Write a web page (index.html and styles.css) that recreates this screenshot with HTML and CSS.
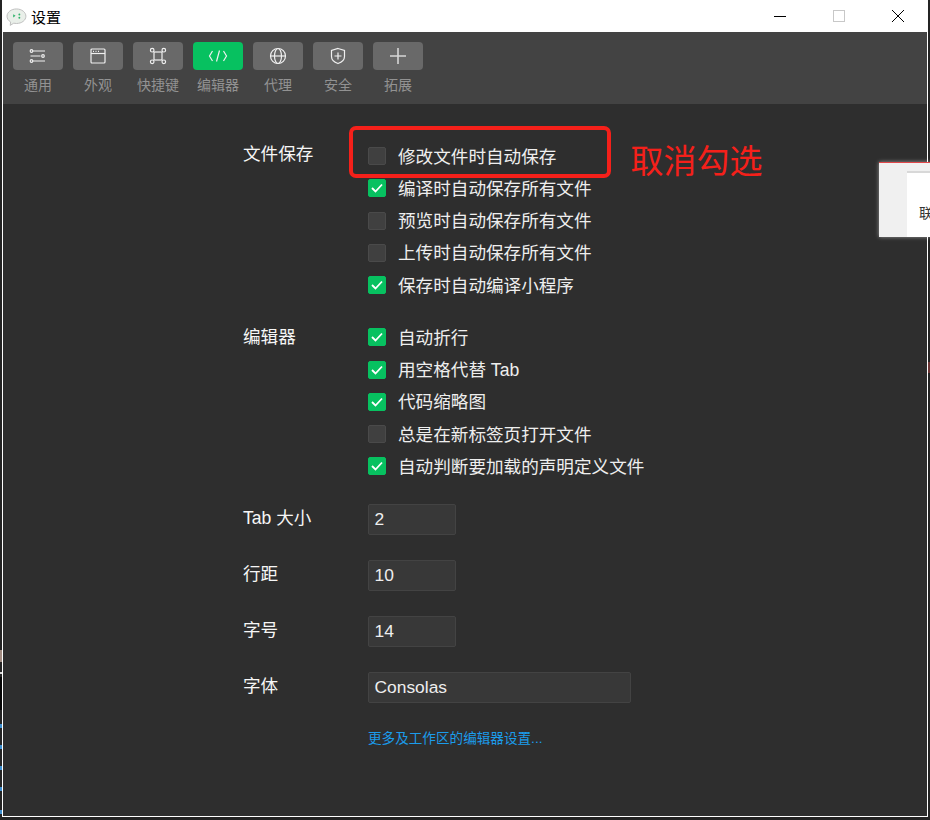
FILE: index.html
```html
<!DOCTYPE html>
<html lang="zh-CN">
<head>
<meta charset="utf-8">
<title>设置</title>
<link rel="stylesheet" href="styles.css">
</head>
<body>
<div class="desktop">
  <div class="window">
    <header class="titlebar">
      <div class="title">
        <svg class="logo" width="21" height="19" viewBox="0 0 22 20"><path d="M11 1C5.500 1 1 4.400 1 8.700c0 2.500 1.500 4.600 3.800 6l-.4 3.600 3.700-2.300c1 .2 1.900.3 2.900.3 5.500 0 9.900-3.400 9.900-7.600S16.500 1 11 1z" fill="#e9efe9" stroke="#bdbdbd"/><path d="M7.500 6.500l2.500 1.700-2.500 1.700z" fill="#2fb36a"/><circle cx="14" cy="6.800" r="1" fill="#2fb36a"/><circle cx="14" cy="10.200" r="1" fill="#2fb36a"/></svg>
        <span>设置</span>
      </div>
      <div class="controls">
        <span class="control"><svg width="14" height="14" viewBox="0 0 14 14"><path d="M1 7.500h12" stroke="#000" fill="none"/></svg></span>
        <span class="control"><svg width="14" height="14" viewBox="0 0 14 14"><rect x="1.500" y="1.500" width="11" height="11" stroke="#c8c8c8" fill="none"/></svg></span>
        <span class="control"><svg width="14" height="14" viewBox="0 0 14 14"><path d="M1 1l12 12M13 1L1 13" stroke="#000" fill="none"/></svg></span>
      </div>
    </header>

    <nav class="toolbar">
      <div class="tool">
        <span class="tool-btn"><svg width="18" height="18" viewBox="0 0 18 18" class="ico"><path d="M4 4h12M1.500 9h10M4 14h12"/><circle cx="2.500" cy="4" r="1.300"/><circle cx="14" cy="9" r="1.300"/><circle cx="2.500" cy="14" r="1.300"/></svg></span>
        <span class="tool-label">通用</span>
      </div>
      <div class="tool">
        <span class="tool-btn"><svg width="18" height="18" viewBox="0 0 18 18" class="ico"><rect x="2" y="2" width="14" height="14" rx="1"/><path d="M2 6.500h14"/><path d="M4 4.300h1M6.500 4.300h1M9 4.300h1"/></svg></span>
        <span class="tool-label">外观</span>
      </div>
      <div class="tool">
        <span class="tool-btn"><svg width="18" height="18" viewBox="0 0 18 18" class="ico"><rect x="5" y="5" width="8" height="8"/><circle cx="3.200" cy="3.200" r="1.800"/><circle cx="14.800" cy="3.200" r="1.800"/><circle cx="3.200" cy="14.800" r="1.800"/><circle cx="14.800" cy="14.800" r="1.800"/></svg></span>
        <span class="tool-label">快捷键</span>
      </div>
      <div class="tool">
        <span class="tool-btn tool-btn-active"><svg width="20" height="18" viewBox="0 0 20 18" class="ico"><path d="M4.500 4L1.500 9l3 5M15.500 4l3 5-3 5M11.500 3.500l-3 11"/></svg></span>
        <span class="tool-label">编辑器</span>
      </div>
      <div class="tool">
        <span class="tool-btn"><svg width="18" height="18" viewBox="0 0 18 18" class="ico"><circle cx="9" cy="9" r="7.500"/><ellipse cx="9" cy="9" rx="3.500" ry="7.500"/><path d="M1.500 9h15"/></svg></span>
        <span class="tool-label">代理</span>
      </div>
      <div class="tool">
        <span class="tool-btn"><svg width="18" height="18" viewBox="0 0 18 18" class="ico"><path d="M9 1.500l6.500 2v6c0 3.500-3 5.800-6.500 7-3.500-1.200-6.500-3.500-6.500-7v-6z"/><path d="M9 5.500v7M5.500 9h7"/></svg></span>
        <span class="tool-label">安全</span>
      </div>
      <div class="tool">
        <span class="tool-btn"><svg width="18" height="18" viewBox="0 0 18 18" class="ico ico-plus"><path d="M9 1v16M1 9h16"/></svg></span>
        <span class="tool-label">拓展</span>
      </div>
    </nav>

    <main class="content">
      <section class="group">
        <div class="group-label group-label-first">文件保存</div>
        <div class="group-body">
          <label class="check"><span class="box"></span>修改文件时自动保存</label>
          <label class="check"><span class="box box-on"><svg width="12" height="10" viewBox="0 0 12 10"><path d="M1 5l3.500 3.500L11 1.500"/></svg></span>编译时自动保存所有文件</label>
          <label class="check"><span class="box"></span>预览时自动保存所有文件</label>
          <label class="check"><span class="box"></span>上传时自动保存所有文件</label>
          <label class="check"><span class="box box-on"><svg width="12" height="10" viewBox="0 0 12 10"><path d="M1 5l3.500 3.500L11 1.500"/></svg></span>保存时自动编译小程序</label>
        </div>
      </section>
      <section class="group">
        <div class="group-label group-label-low">编辑器</div>
        <div class="group-body">
          <label class="check"><span class="box box-on"><svg width="12" height="10" viewBox="0 0 12 10"><path d="M1 5l3.500 3.500L11 1.500"/></svg></span>自动折行</label>
          <label class="check"><span class="box box-on"><svg width="12" height="10" viewBox="0 0 12 10"><path d="M1 5l3.500 3.500L11 1.500"/></svg></span>用空格代替 Tab</label>
          <label class="check"><span class="box box-on"><svg width="12" height="10" viewBox="0 0 12 10"><path d="M1 5l3.500 3.500L11 1.500"/></svg></span>代码缩略图</label>
          <label class="check"><span class="box"></span>总是在新标签页打开文件</label>
          <label class="check"><span class="box box-on"><svg width="12" height="10" viewBox="0 0 12 10"><path d="M1 5l3.500 3.500L11 1.500"/></svg></span>自动判断要加载的声明定义文件</label>
        </div>
      </section>
      <div class="fields">
        <div class="field"><div class="group-label">Tab 大小</div><div class="input input-short">2</div></div>
        <div class="field"><div class="group-label">行距</div><div class="input input-short">10</div></div>
        <div class="field"><div class="group-label">字号</div><div class="input input-short">14</div></div>
        <div class="field"><div class="group-label">字体</div><div class="input input-long">Consolas</div></div>
      </div>
      <a class="more">更多及工作区的编辑器设置...</a>
    </main>

    <div class="highlight"></div>
    <div class="annotation">取消勾选</div>
    <div class="popover">
      <div class="popover-side"></div>
      <div class="popover-main"><span class="popover-char">联</span></div>
    </div>
  </div>
  <i class="edge edge-a"></i><i class="edge edge-b"></i><i class="edge edge-c"></i>
  <i class="edge edge-dot d1"></i><i class="edge edge-dot d2"></i><i class="edge edge-dot d3"></i><i class="edge edge-dot d4"></i><i class="edge edge-dot d5"></i>
  <i class="edge edge-r"></i>
</div>
</body>
</html>
```

FILE: styles.css
```css
html, body {
  margin: 0;
  padding: 0;
}

body {
  font-family: "Liberation Sans", "Noto Sans CJK SC", sans-serif;
}

.desktop {
  position: relative;
  width: 930px;
  height: 820px;
  overflow: hidden;
  background: #242424;
  padding-left: 2px;
  box-sizing: border-box;
}

.window {
  position: relative;
  width: 926px;
  height: 817px;
  box-sizing: border-box;
  border: 1px solid #fff;
  border-top: 0;
  display: flex;
  flex-direction: column;
  background: #2e2e2e;
}

.titlebar {
  height: 32px;
  flex: none;
  background: #fff;
  display: flex;
  align-items: center;
  justify-content: space-between;
}

.title {
  display: flex;
  align-items: center;
  gap: 4px;
  padding-left: 3px;
  font-size: 15px;
  color: #000;
}

.logo {
  display: block;
  margin-top: 2px;
}

.controls {
  display: flex;
}

.control {
  width: 59px;
  height: 32px;
  display: flex;
  align-items: center;
  justify-content: center;
}

.toolbar {
  height: 72px;
  flex: none;
  background: #434343;
  box-sizing: border-box;
  padding: 10px 0 0 10px;
  display: flex;
  gap: 10px;
}

.tool {
  width: 50px;
  display: flex;
  flex-direction: column;
  align-items: center;
}

.tool-btn {
  width: 50px;
  height: 28px;
  border-radius: 4px;
  background: #696969;
  display: flex;
  align-items: center;
  justify-content: center;
}

.tool-btn-active {
  background: #07c160;
}

.ico {
  fill: none;
  stroke: #f0f0f0;
  stroke-width: 1.200;
}

.ico-plus {
  stroke: #d6d6d6;
  stroke-width: 1.600;
}

.tool-label {
  margin-top: 5px;
  width: 70px;
  text-align: center;
  font-size: 14px;
  line-height: 20px;
  color: #929292;
}

.content {
  flex: 1;
  padding: 35px 0 0 240px;
  color: #f0f0f0;
  font-size: 17.600px;
}

.group {
  display: flex;
  margin-bottom: 20px;
}

.group-label {
  width: 125px;
  flex: none;
  line-height: 32px;
  color: #f6f6f6;
}

.group-label-first {
  margin-top: -1px;
}

.group-label-low {
  margin-top: 1px;
}

.group-body {
  display: flex;
  flex-direction: column;
}

.check {
  height: 32.250px;
  display: flex;
  align-items: center;
  gap: 12px;
  color: #eeeeee;
}

.box {
  width: 18px;
  height: 18px;
  margin-top: 2px;
  box-sizing: border-box;
  border: 1px solid #4a4a4a;
  border-radius: 2px;
  background: #404040;
  display: flex;
  align-items: center;
  justify-content: center;
}

.box-on {
  border-color: #07c160;
  background: #07c160;
}

.box-on svg {
  fill: none;
  stroke: #fff;
  stroke-width: 1.800;
}

.fields {
  margin-top: 22px;
  display: flex;
  flex-direction: column;
  gap: 25px;
}

.field {
  display: flex;
  height: 31px;
}

.field .group-label {
  line-height: 28px;
}

.input {
  height: 31px;
  box-sizing: border-box;
  border: 1px solid #434343;
  border-radius: 2px;
  background: #383838;
  padding-left: 5.500px;
  line-height: 29px;
  color: #eeeeee;
  font-size: 17.400px;
}

.input-short {
  width: 88px;
}

.input-long {
  width: 263px;
}

.more {
  display: block;
  margin: 27px 0 0 125px;
  font-size: 13.600px;
  line-height: 18px;
  color: #1b9ceb;
}

.highlight {
  position: absolute;
  left: 346px;
  top: 126px;
  width: 261.500px;
  height: 52px;
  box-sizing: border-box;
  border: 4px solid #f5201a;
  border-radius: 7px;
}

.annotation {
  position: absolute;
  left: 627.500px;
  top: 142px;
  font-size: 33px;
  line-height: 40px;
  color: #f5201a;
}

.popover {
  position: absolute;
  left: 876px;
  top: 162px;
  width: 52px;
  height: 75px;
  display: flex;
  border-top: 1px solid #e2474a;
  box-sizing: border-box;
  background: #f0f0f0;
  box-shadow: 0 0 4px rgba(255, 255, 255, .5);
  overflow: hidden;
}

.popover-side {
  width: 28px;
  flex: none;
}

.popover-main {
  flex: 1;
  margin-top: 8px;
  background: #fff;
  border-top: 2px solid #d8d8d8;
  position: relative;
}

.popover-char {
  position: absolute;
  left: 12px;
  top: 32px;
  font-size: 14px;
  line-height: 16px;
  color: #333;
  white-space: nowrap;
}

.edge {
  position: absolute;
  display: block;
  left: 0;
  width: 2px;
}

.edge-a { top: 650px; height: 12px; background: #a08a80; }
.edge-b { top: 672px; height: 2px; background: #d8d8d8; }
.edge-c { top: 677px; height: 33px; background: #060606; }
.edge-dot { height: 4px; background: #3d8fd0; }
.d1 { top: 724px; }
.d2 { top: 745px; }
.d3 { top: 766px; }
.d4 { top: 787px; }
.d5 { top: 810px; }
.edge-r { left: 928px; top: 362px; height: 11px; background: #6b3535; }
```
